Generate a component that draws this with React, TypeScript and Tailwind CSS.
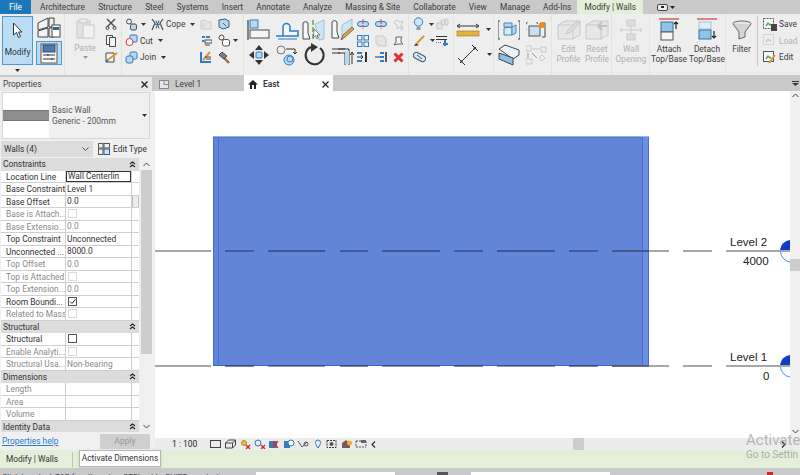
import React from "react";

const S = ({ w = 16, h = 16, children }: { w?: number; h?: number; children: React.ReactNode }) => (
  <svg width={w} height={h} viewBox={`0 0 ${w} ${h}`} fill="none" className="block shrink-0">
    {children}
  </svg>
);
const Caret = ({ c = "#333" }: { c?: string }) => (
  <svg width="5" height="3" viewBox="0 0 5 3" className="block shrink-0"><path d="M0 0h5L2.5 3z" fill={c} /></svg>
);
const D = "#4a4a4a", B = "#2f7cc1", L = "#b9d8ee", G = "#c9c9c9", R = "#e0362c";

const Scissors = () => <S w={12} h={12}><path d="M2 1l8 8M10 1L2 9" stroke={D} strokeWidth="1.4" /><circle cx="2.5" cy="10" r="1.5" stroke={D} /><circle cx="9.5" cy="10" r="1.5" stroke={D} /></S>;
const CopyI = () => <S w={12} h={13}><path d="M1.5 1.5h6v9h-6z" fill="#f6f6f6" stroke={D} /><path d="M4.5 3.5h6v9h-6z" fill="#f6f6f6" stroke={D} /></S>;
const Match = () => <S w={13} h={13}><path d="M1 2h8v9H1z" fill="#f4f4f4" stroke={D} /><path d="M2.5 9L12 2" stroke="#d69a2d" strokeWidth="2" /><path d="M1 11l2-2" stroke={B} strokeWidth="2" /></S>;
const JoinSm = () => <S w={13} h={13}><circle cx="4" cy="3.5" r="2.5" stroke={D} /><rect x="5.5" y="6" width="6" height="6" rx="1.5" fill={L} stroke={D} /></S>;
const CopeI = () => <S w={13} h={13}><path d="M1 1l3 4-3 7M12 1L9 5l3 7" stroke={D} strokeWidth="1.2" /><path d="M5 2.5l3 8M8 2.5l-3 8" stroke={D} /><path d="M3 6.5h7" stroke={B} /></S>;
const CutI = () => <S w={13} h={13}><rect x="5" y="1" width="7" height="7" rx="1" fill={L} stroke={B} /><circle cx="4.5" cy="8" r="3.5" fill="#fff" stroke={R} /></S>;
const JoinI = () => <S w={13} h={13}><rect x="5" y="1" width="7" height="7" rx="1.5" fill={L} stroke={B} /><rect x="1" y="5" width="7" height="7" rx="2" fill={L} stroke={B} /></S>;
const Dis1 = () => <S w={12} h={12}><path d="M1 3l4-1 2 2h4v7H1z" fill="#e7e7e7" stroke={G} /><rect x="2" y="5" width="4" height="4" fill="#ddd" /></S>;
const Cube = () => <S w={12} h={12}><path d="M1 2l6-1 4 2v6l-6 2-4-2z" fill={L} stroke="#2d5f88" /><path d="M5 5l3 3" stroke="#2d5f88" /></S>;
const Paint = () => <S w={12} h={12}><path d="M2 2h3M6 2h4" stroke={B} strokeWidth="2" /><path d="M2 6h2" stroke={B} strokeWidth="2" /><rect x="5" y="5" width="7" height="3" fill="#fff" stroke={D} /><path d="M5 10h5" stroke={D} /></S>;
const Ring = () => <S w={13} h={13}><circle cx="3.5" cy="3.5" r="2.5" stroke={D} /><rect x="4.5" y="5.5" width="7" height="6.5" rx="2" fill="#fff" stroke={D} /></S>;
const Brush = () => <S w={12} h={12}><path d="M1 1v10h10" stroke={B} strokeWidth="2" /><path d="M3 9l7-8" stroke="#d69a2d" strokeWidth="2" /><path d="M5 6h6M6 8h5" stroke={D} /></S>;
const Hammer = () => <S w={13} h={13}><path d="M5 6l6 6" stroke="#a9683a" strokeWidth="2.4" /><path d="M1 4l3-3 5 4-3 3z" fill="#77818a" stroke={D} /></S>;

const AlignBox = () => <S w={24} h={22}><path d="M1 1v20" stroke={D} strokeWidth="1.3" /><rect x="3" y="1" width="8" height="8" fill={L} stroke={B} /><rect x="3" y="11" width="19" height="8" fill="#f5f5f5" stroke={D} /></S>;
const Move = () => <S w={22} h={22}><path d="M11 1l4 5H7zM11 21l4-5H7zM1 11l5-4v8zM21 11l-5-4v8z" fill="#333" /><rect x="8" y="8" width="6" height="6" rx="1" fill={L} stroke={B} /></S>;
const Offset = () => <S w={24} h={20}><path d="M1 16h7V7a3 3 0 0 1 7 0v4h8v5z" fill="#f1f6fa" stroke={B} strokeWidth="1.5" /><path d="M3 19h19" stroke={B} /></S>;
const CopyMove = () => <S w={24} h={22}><circle cx="6" cy="6" r="4" stroke="#777" /><circle cx="14" cy="16" r="5" fill={L} stroke={B} /><circle cx="15" cy="15" r="3" stroke={B} /><path d="M11 5h9v5M18 8l2 2 2-2" stroke="#333" /></S>;
const Split = () => <S w={24} h={22}><path d="M1 20V4a3 3 0 0 1 5 0v10l2 6z" fill="#f5f5f5" stroke={D} /><path d="M11 1v21" stroke="#4ca64c" strokeWidth="1.4" strokeDasharray="5 2" /><path d="M13 5l9-4v19l-5 1z" fill="#cfe3f2" stroke="#9cc3dd" /><path d="M12 10l6 6-3 0 1 3-1.5.5-1-3-2 2z" fill="#fff" stroke="#555" strokeWidth=".7" /></S>;
const EditPen = () => <S w={24} h={24}><path d="M1 20V4a3 3 0 0 1 5 0v10l2 6z" fill="#f5f5f5" stroke={D} /><path d="M11 22V7l10-6v10" fill="#cfe3f2" stroke="#9cc3dd" /><path d="M10 22l2-5 9-8 2 2-9 8z" fill="#e2a63a" stroke="#333" strokeWidth=".6" /></S>;
const Rotate = () => <S w={24} h={24}><path d="M9 4a9 9 0 1 0 9 1" stroke="#333" strokeWidth="2" /><path d="M9 0l7 4-7 5z" fill="#333" /></S>;
const Trim = () => <S w={24} h={22}><path d="M1 5h13M1 9h8" stroke="#333" /><path d="M7 5h11v16M7 9h7v12" stroke="#333" /><path d="M14 7h4v13h-4z" fill={L} /><path d="M21 20V8M19 11l2-3 2 3" stroke="#333" /></S>;
const SmA = () => <S w={12} h={10}><rect x="0.5" y="2.5" width="11" height="5" rx="2.5" fill={L} stroke={B} /><path d="M6 0v10" stroke={R} strokeDasharray="2 1" /></S>;
const Grid4 = () => <S w={12} h={12}><rect x=".5" y=".5" width="4.5" height="4.5" stroke={B} /><rect x="7" y=".5" width="4.5" height="4.5" stroke={B} /><rect x=".5" y="7" width="4.5" height="4.5" stroke={B} /><rect x="7" y="7" width="4.5" height="4.5" stroke={B} /></S>;
const ScaleD = () => <S w={12} h={12}><path d="M1 1h8v2h2v8H3V9H1z" fill="#e4e4e4" stroke={G} /></S>;
const PinD = () => <S w={11} h={11}><path d="M3 1l4 2 3-1-2 4 2 3-3-1-3 2v-4L1 4z" stroke={G} /><path d="M7 8l3 3M10 8l-3 3" stroke={G} /></S>;
const PinK = () => <S w={11} h={10}><path d="M3 1h6L8 3v3l2 2H5L1 9l2-3z" fill="#f4f4f4" stroke="#666" /></S>;
const Ext1 = () => <S w={12} h={12}><path d="M0 6h6M4 4l2 2-2 2" stroke="#333" /><rect x="0" y="1" width="5" height="2" fill={B} /><rect x="0" y="9" width="5" height="2" fill={B} /><path d="M9 1v10" stroke="#333" strokeWidth="2" /></S>;
const Ext2 = () => <S w={12} h={12}><path d="M0 6h5" stroke="#333" /><rect x="5" y="1" width="4" height="2" fill={B} /><rect x="5" y="5" width="4" height="2" fill={B} /><rect x="5" y="9" width="4" height="2" fill={B} /><path d="M11 1v10" stroke="#333" strokeWidth="1.6" /></S>;
const Del = () => <S w={11} h={11}><path d="M1.5 1.5l8 8M9.5 1.5l-8 8" stroke="#e03131" strokeWidth="3" /></S>;

const Bulb = () => <S w={11} h={14}><circle cx="5.5" cy="5" r="4.2" fill="#cfe6f7" stroke={B} /><path d="M3.5 10h4v3h-4z" fill="#999" /></S>;
const Cubes = () => <S w={13} h={12}><path d="M1 5h5v6H1zM5 2h4v5H5zM9 1h3v6H9z" fill="#e4e4e4" stroke={G} /></S>;
const BrushV = () => <S w={12} h={12}><path d="M1 11l2-3 3 2-3 1z" fill="#7b3c1d" /><path d="M4 8l7-7" stroke="#d69a2d" strokeWidth="2" /></S>;
const Lines = () => <S w={12} h={12}><path d="M0 1.5h11M0 4.5h11" stroke="#333" /><path d="M0 7.5h5" stroke="#777" strokeDasharray="1 1" /><path d="M9 5v6M7 9h5" stroke={B} strokeWidth="2" /></S>;
const Link = () => <S w={13} h={12}><rect x="0" y="3" width="13" height="6" rx="3" transform="rotate(28 6.5 6)" fill="#d8e8f5" stroke="#405a70" /><path d="M4 4l5 4" stroke="#405a70" /></S>;
const Ruler = () => <S w={24} h={14}><path d="M1 3h22M1 3l3-2M1 3l3 2M23 3l-3-2M23 3l-3 2" stroke="#333" /><rect x="1" y="8" width="22" height="5" fill="#e3b23c" stroke="#9a7a1e" strokeWidth=".6" /></S>;
const Diag = () => <S w={22} h={22}><path d="M3 19L19 3M1 14l7 7M15 1l6 6" stroke="#333" /><path d="M3 19l3-1-2-2zM19 3l-3 1 2 2z" fill="#333" /></S>;
const Box3 = () => <S w={22} h={20}><path d="M2 1H0v18h2M20 1h2v18h-2" stroke="#444" /><path d="M6 8l8-1v8H6z" fill="#d8ecf8" stroke="#4b88b5" /><path d="M6 3h8v4H6zM14 7l4-2v8l-4 2z" fill={L} stroke="#4b88b5" /></S>;
const Sheets = () => <S w={22} h={22}><path d="M1 5l6-4 14 5v5l-6 4z" fill="#e9f2f8" stroke="#444" /><path d="M1 9l14 5v7L1 15z" fill="#8fbfe3" stroke="#444" /></S>;
const BoxS = () => <S w={20} h={16}><path d="M0 8a6 6 0 0 1 12-6" stroke="#555" /><rect x="3" y="4" width="11" height="10" fill="#cbdff0" stroke="#555" /><path d="M16 1h3v14h-3" stroke="#444" /><circle cx="16" cy="3" r="3" fill="#ef8b1c" /></S>;
const CtrlD = () => <S w={22} h={20}><rect x="0" y="1" width="5" height="5" stroke={G} /><rect x="15" y="2" width="5" height="5" stroke={G} /><path d="M6 4h8" stroke={G} /><path d="M2 8v5M6 8l5 5" stroke="#999" /><rect x="0" y="14" width="6" height="5" stroke={G} /><path d="M16 10l3 3-3 3-3-3z" stroke={G} /></S>;

const SelBig = () => <S w={12} h={17}><path d="M1.5 1v12l3-2.5 2 5 2-1-2-4.5H10z" fill="#fff" stroke="#333" /></S>;
const Sel2 = () => <S w={24} h={22}><path d="M1 6l10-5v9l-10 3zM1 14l10-3v9H1z" fill="#f4f4f4" stroke="#444" /><path d="M12 1h5v9h-5z" fill="#eee" stroke="#444" /><path d="M12 11h5v9h-5z" fill="#eee" stroke="#444" /><rect x="15" y="8" width="8" height="12" fill="#fff" stroke="#444" /><rect x="16" y="10" width="6" height="3" fill="#375f9b" /></S>;
const PropI = () => <S w={20} h={21}><rect x="2" y="1" width="16" height="19" fill="#f8f8f8" stroke="#555" /><rect x="4" y="2" width="12" height="7" fill="#4d78b0" stroke="#2b4d7e" /><path d="M4 12h12M4 16h12" stroke="#333" /><path d="M9 11v2M13 15v2" stroke="#333" /></S>;
const Paste = () => <S w={19} h={21}><path d="M1 3h13v17H1z" fill="#e2e2e2" stroke={G} /><rect x="4" y="1" width="7" height="4" fill="#ececec" stroke={G} /><path d="M7 7h11v13H7z" fill="#f2f2f2" stroke={G} /></S>;
const Prof = ({ sym }: { sym: "p" | "r" }) => <S w={24} h={22}><path d="M1 6l7-4h15v14l-7 4H1z" fill="#e7e7e7" stroke={G} /><path d="M1 6h15v14" stroke={G} />{sym === "p" ? <path d="M9 15l2-4 9-9 3 2-9 9z" fill="#dadada" stroke={G} /> : <path d="M22 7h-8M17 3l-4 4 4 4" stroke="#c2c2c2" strokeWidth="2" />}</S>;
const WallOp = () => <S w={24} h={22}><rect x="8" y="1" width="8" height="6" fill="#ddd" stroke={G} /><rect x="8" y="15" width="8" height="6" fill="#ddd" stroke={G} /><path d="M12 7v8M1 11h22M1 11l2-2M1 11l2 2M23 11l-2-2M23 11l-2 2" stroke={G} /></S>;
const Attach = () => <S w={21} h={23}><path d="M0 1h20" stroke="#d4605a" strokeWidth="1.5" /><rect x="2" y="4" width="12" height="10" fill="#8ec4e8" stroke="#3a6f9c" /><rect x="2" y="14" width="12" height="8" fill="#f6f6f6" stroke="#555" /><path d="M17 11V4M15 6l2-2 2 2" stroke="#222" strokeWidth="1.2" /></S>;
const Detach = () => <S w={21} h={23}><path d="M0 1h20" stroke="#d4605a" strokeWidth="1.5" /><rect x="2" y="4" width="12" height="7" fill="#e2eef7" stroke="#9fc3dc" /><rect x="2" y="12" width="12" height="9" fill="#8ec4e8" stroke="#3a6f9c" /><path d="M17 13v7M15 18l2 2 2-2" stroke="#222" strokeWidth="1.2" /></S>;
const Funnel = () => <S w={20} h={20}><ellipse cx="10" cy="3.5" rx="9" ry="2.5" fill="#e4e4e4" stroke="#666" /><path d="M1 4l6 8v7l6-2v-5l6-8" fill="#d4d4d4" stroke="#666" /></S>;
const SaveI = ({ dis, pen }: { dis?: boolean; pen?: boolean }) => <S w={14} h={13}><rect x=".5" y=".5" width="10" height="10" fill={dis ? "#eee" : "#fafafa"} stroke={dis ? G : "#555"} strokeDasharray={pen ? undefined : "2 1"} /><path d="M3 8l2-3 2 2 1-1" stroke={dis ? G : "#4ca64c"} strokeWidth="1.4" />{!dis && !pen && <rect x="8" y="6" width="6" height="7" fill="#444" />}{pen && <path d="M6 12l6-8" stroke="#d69a2d" strokeWidth="2" />}</S>;

const Txt = ({ c = "#3d3d3d", children }: { c?: string; children: React.ReactNode }) => (
  <span className="text-[8.4px] leading-[10px] whitespace-nowrap text-center" style={{ color: c }}>{children}</span>
);

const tabs = ["Architecture", "Structure", "Steel", "Systems", "Insert", "Annotate", "Analyze", "Massing & Site", "Collaborate", "View", "Manage", "Add-Ins"];

const Panel = ({ w, children }: { w: number; children: React.ReactNode }) => (
  <div className="flex h-full shrink-0 border-r border-[#e0e6d8]" style={{ width: w }}>{children}</div>
);
const Col = ({ w, children }: { w: number; children: React.ReactNode }) => (
  <div className="flex h-full flex-col pt-[2px] shrink-0" style={{ width: w }}>{children}</div>
);
const Sm = ({ children }: { children?: React.ReactNode }) => (
  <div className="flex h-[16.5px] items-center gap-[2px]">{children}</div>
);
const Big2 = ({ w, a, b }: { w: number; a: React.ReactNode; b: React.ReactNode }) => (
  <div className="flex h-full flex-col items-center pt-[3px] shrink-0" style={{ width: w }}>
    <div className="flex h-[25px] items-center">{a}</div>
    <div className="flex h-[25px] items-center">{b}</div>
  </div>
);
const Big = ({ w, icon, l1, l2, c }: { w: number; icon: React.ReactNode; l1: string; l2?: string; c?: string }) => (
  <div className="flex h-full flex-col items-center pt-[3px] shrink-0" style={{ width: w }}>
    <div className="flex h-[25px] items-center">{icon}</div>
    <div className="mt-[2px] flex flex-col items-center">
      <Txt c={c}>{l1}</Txt>
      {l2 && <Txt c={c}>{l2}</Txt>}
    </div>
  </div>
);

const Ribbon = () => (
  <div className="flex h-[61px] shrink-0 bg-[#eeeeee]">
    <Panel w={65}>
      <div className="flex w-full">
        <div className="ml-[2px] mt-[2px] flex w-[31px] flex-col items-center">
          <div className="flex h-[49px] w-[31px] flex-col items-center border border-[#4b9ad8] bg-[#bcdcf4] pt-[5px]">
            <SelBig />
            <span className="mt-[8px] text-[8.4px] leading-[10px] text-[#333]">Modify</span>
          </div>
          <div className="mt-[4px]"><Caret /></div>
        </div>
        <div className="ml-[3px] flex flex-col items-center pt-[3px]">
          <div className="h-[22px]"><Sel2 /></div>
          <div className="mt-[2px] flex h-[24px] w-[26px] items-center justify-center border border-[#4b9ad8] bg-[#bcdcf4]"><PropI /></div>
        </div>
      </div>
    </Panel>
    <Panel w={57}>
      <div className="flex w-[40px] flex-col items-center pt-[4px]">
        <Paste />
        <span className="mt-[4px] text-[8.4px] leading-[10px] text-[#b0b0b0]">Paste</span>
        <div className="mt-[3px]"><Caret c="#999" /></div>
      </div>
      <Col w={14}>
        <Sm><Scissors /></Sm>
        <Sm><CopyI /></Sm>
        <Sm><Match /></Sm>
      </Col>
    </Panel>
    <Panel w={122}>
      <Col w={78}>
        <Sm><div className="ml-[1px]" /><JoinSm /><div className="ml-[1px]"><Caret /></div><div className="ml-[1px]" /><CopeI /><Txt>Cope</Txt><div className="ml-[3px]"><Caret /></div></Sm>
        <Sm><div className="ml-[1px]" /><CutI /><Txt>Cut</Txt><div className="ml-[3px]"><Caret /></div></Sm>
        <Sm><div className="ml-[1px]" /><JoinI /><Txt>Join</Txt><div className="ml-[3px]"><Caret /></div></Sm>
      </Col>
      <Col w={18}>
        <Sm><Dis1 /></Sm><Sm><Paint /></Sm><Sm><Brush /></Sm>
      </Col>
      <Col w={24}>
        <Sm><Cube /></Sm><Sm><Ring /><Caret /></Sm><Sm><Hammer /></Sm>
      </Col>
    </Panel>
    <Panel w={165}>
      <Big2 w={30} a={<AlignBox />} b={<Move />} />
      <Big2 w={26} a={<Offset />} b={<CopyMove />} />
      <Big2 w={28} a={<Split />} b={<Rotate />} />
      <Big2 w={29} a={<EditPen />} b={<Trim />} />
      <Col w={18}><Sm><SmA /></Sm><Sm><Grid4 /></Sm><Sm><Ext1 /></Sm></Col>
      <Col w={18}><Sm><SmA /></Sm><Sm><ScaleD /></Sm><Sm><Ext2 /></Sm></Col>
      <Col w={16}><Sm><PinD /></Sm><Sm><PinK /></Sm><Sm><Del /></Sm></Col>
    </Panel>
    <Panel w={45}>
      <Col w={27}>
        <Sm><div className="ml-[2px]" /><Bulb /><div className="ml-[3px]"><Caret /></div></Sm>
        <Sm><div className="ml-[2px]" /><BrushV /><div className="ml-[3px]"><Caret /></div></Sm>
        <Sm><div className="ml-[2px]" /><Link /></Sm>
      </Col>
      <Col w={15}><Sm><Cubes /></Sm><Sm><Lines /></Sm></Col>
    </Panel>
    <Panel w={40}>
      <div className="flex h-full w-full flex-col pt-[3px] pl-[2px]">
        <div className="flex h-[25px] items-center gap-[6px]"><Ruler /><Caret /></div>
        <div className="flex h-[25px] items-center gap-[8px]"><div className="ml-[1px]"><Diag /></div><Caret /></div>
      </div>
    </Panel>
    <Panel w={58}>
      <div className="flex w-[30px] flex-col items-center pt-[3px]">
        <div className="flex h-[25px] items-center"><Box3 /></div>
        <div className="flex h-[25px] items-center"><Sheets /></div>
      </div>
      <div className="flex flex-col pt-[3px] pl-[2px]">
        <div className="flex h-[25px] items-center"><BoxS /></div>
        <div className="flex h-[25px] items-center"><CtrlD /></div>
      </div>
    </Panel>
    <div className="w-[2px] shrink-0" />
    <Panel w={58}>
      <Big w={29} icon={<Prof sym="p" />} l1="Edit" l2="Profile" c="#b0b0b0" />
      <Big w={28} icon={<Prof sym="r" />} l1="Reset" l2="Profile" c="#b0b0b0" />
    </Panel>
    <Panel w={38}><Big w={38} icon={<WallOp />} l1="Wall" l2="Opening" c="#b0b0b0" /></Panel>
    <Big w={38} icon={<Attach />} l1="Attach" l2="Top/Base" />
    <Panel w={38}><Big w={38} icon={<Detach />} l1="Detach" l2="Top/Base" /></Panel>
    <div className="flex h-full w-[31px] shrink-0 justify-center"><Big w={31} icon={<Funnel />} l1="Filter" /></div>
    <div className="mt-[2px] h-[50px] w-px shrink-0 bg-[#c5c5c5]" />
    <div className="flex flex-col pt-[2px] pl-[5px]">
      <Sm><SaveI /><Txt>Save</Txt></Sm>
      <Sm><SaveI dis /><Txt c="#b0b0b0">Load</Txt></Sm>
      <Sm><SaveI pen /><Txt>Edit</Txt></Sm>
    </div>
  </div>
);

const Cheva = () => (
  <svg width="7" height="7" viewBox="0 0 7 7" fill="none" className="block"><path d="M1 3l2.5-2L6 3M1 6l2.5-2L6 6" stroke="#222" strokeWidth="1.1" /></svg>
);
const Head = ({ t }: { t: string }) => (
  <div className="flex h-[12.5px] items-center justify-between bg-[#dcdcdc] pl-[2px] pr-[3px] text-[8.4px] leading-[12px] text-[#333]">
    <span>{t}</span><Cheva />
  </div>
);
type RowT = { l: string; v?: string; dim?: boolean; box?: "on" | "off" | "dis"; act?: boolean; thumb?: boolean };
const Row = ({ l, v, dim, box, act, thumb }: RowT) => (
  <div className="flex h-[12.5px] border-b border-[#cfcfcf] bg-white text-[8.4px] leading-[12px]">
    <div className={`w-[65px] shrink-0 overflow-hidden whitespace-nowrap border-r border-[#cfcfcf] pl-[5px] ${dim ? "text-[#8a8a8a]" : "text-[#333]"}`}>{l}</div>
    <div className={`flex w-[65px] shrink-0 items-center overflow-hidden whitespace-nowrap pl-[1px] ${dim ? "text-[#8a8a8a]" : "text-[#333]"} ${act ? "border border-[#333] pl-0" : ""}`}>
      {box === "on" && <svg width="9" height="9" viewBox="0 0 9 9" className="ml-[1px]" fill="none"><rect x=".5" y=".5" width="8" height="8" stroke="#555" /><path d="M2 4.5l2 2 3.5-4.5" stroke="#333" /></svg>}
      {box === "off" && <div className="ml-[1px] h-[9px] w-[9px] border border-[#555]" />}
      {box === "dis" && <div className="ml-[1px] h-[9px] w-[9px] border border-[#dadada]" />}
      {v}
    </div>
    <div className="flex w-[8px] shrink-0 justify-end border-l border-[#cfcfcf]">
      {thumb && <div className="h-full w-[7px] border-x border-[#bdbdbd] bg-[#ececec]" />}
    </div>
  </div>
);

const PropsPanel = () => (
  <div className="flex h-full w-[152px] shrink-0 flex-col bg-[#f0f0f0]">
    <div className="flex h-[16px] shrink-0 items-center justify-between border-t-2 border-[#c9c9c9] bg-[#e9e9e9] pl-[3px] pr-[4px] text-[8.4px] text-[#444]">
      <span>Properties</span>
      <svg width="7" height="7" viewBox="0 0 7 7" fill="none"><path d="M.5.5l6 6M6.5.5l-6 6" stroke="#222" strokeWidth="1.3" /></svg>
    </div>
    <div className="mx-[2px] mt-[1px] flex h-[47px] shrink-0 items-center border border-[#d6d6d6]">
      <div className="flex h-[45px] w-[46px] shrink-0 items-center bg-white">
        <div className="h-[11px] w-full border-y border-[#777] bg-[#8e8e8e]" />
      </div>
      <div className="ml-[3px] flex-1 text-[8.4px] leading-[11px] text-[#555]">
        <div>Basic Wall</div>
        <div className="whitespace-nowrap">Generic - 200mm</div>
      </div>
      <div className="mr-[2px]"><Caret /></div>
    </div>
    <div className="mt-[1px] flex h-[18px] shrink-0 items-center">
      <div className="ml-[1px] flex h-[16px] w-[92px] items-center justify-between bg-[#dcdcdc] pl-[3px] pr-[4px] text-[8.4px] text-[#333]">
        <span>Walls (4)</span>
        <svg width="7" height="4" viewBox="0 0 7 4" fill="none"><path d="M.5.5l3 3 3-3" stroke="#555" /></svg>
      </div>
      <div className="ml-[5px]"><S w={12} h={12}><rect x=".5" y=".5" width="4.5" height="4.5" stroke="#555" /><rect x="6" y=".5" width="5.5" height="4.5" stroke="#555" /><rect x=".5" y="6" width="4.5" height="5.5" stroke="#555" /><rect x="6" y="6" width="5.5" height="5.5" stroke="#2f5f9a" fill="#cfe0f0" /></S></div>
      <span className="ml-[3px] whitespace-nowrap text-[8.4px] text-[#333]">Edit Type</span>
    </div>
    <div className="flex min-h-0 flex-1">
      <div className="ml-[1px] h-[274px] w-[138px] shrink-0 overflow-hidden">
        <Head t="Constraints" />
        <Row l="Location Line" v="Wall Centerlin" act />
        <Row l="Base Constraint" v="Level 1" />
        <Row l="Base Offset" v="0.0" thumb />
        <Row l="Base is Attach..." box="dis" dim />
        <Row l="Base Extensio..." v="0.0" dim />
        <Row l="Top Constraint" v="Unconnected" />
        <Row l="Unconnected ..." v="8000.0" />
        <Row l="Top Offset" v="0.0" dim />
        <Row l="Top is Attached" box="dis" dim />
        <Row l="Top Extension..." v="0.0" dim />
        <Row l="Room Boundi..." box="on" />
        <Row l="Related to Mass" box="dis" dim />
        <Head t="Structural" />
        <Row l="Structural" box="off" />
        <Row l="Enable Analyti..." box="dis" dim />
        <Row l="Structural Usa..." v="Non-bearing" dim />
        <Head t="Dimensions" />
        <Row l="Length" dim />
        <Row l="Area" dim />
        <Row l="Volume" dim />
        <Head t="Identity Data" />
      </div>
      <div className="ml-[1px] flex h-[274px] w-[12px] shrink-0 flex-col items-center">
        <div className="flex h-[12px] items-center"><svg width="7" height="5" viewBox="0 0 7 5" fill="none"><path d="M.5 4l3-3 3 3" stroke="#444" /></svg></div>
        <div className="h-[184px] w-[11px] bg-[#cdcdcd]" />
        <div className="flex-1" />
        <div className="flex h-[12px] items-center"><svg width="7" height="5" viewBox="0 0 7 5" fill="none"><path d="M.5 1l3 3 3-3" stroke="#444" /></svg></div>
      </div>
    </div>
    <div className="flex h-[17px] shrink-0 items-center justify-between pl-[2px] pr-[2px] text-[8.4px]">
      <span className="text-[#2a7cc7] underline">Properties help</span>
      <div className="flex h-[15px] w-[50px] items-center justify-center border border-[#d0d0d0] bg-[#cfcfcf] text-[#999]">Apply</div>
    </div>
  </div>
);

const dashes: [number, number][] = [[155, 211], [225, 254], [268, 325], [340, 368], [382, 440], [454, 483], [497, 555], [569, 598], [612, 669], [683, 712], [726, 790]];

const Canvas = () => (
  <div className="relative min-h-0 flex-1 overflow-hidden bg-white">
    <svg className="absolute inset-0 block" width="645" height="347" viewBox="155 91 645 347" fill="none">
      <rect x="213.5" y="137" width="435" height="229" fill="#6285d8" />
      <path d="M213 137h436" stroke="#3f62c4" strokeWidth="1" />
      <path d="M213.5 137v229M218.5 137v229M642.5 137v229M648.5 137v229" stroke="#4a6fd0" strokeWidth="1" />
      <rect x="643" y="137" width="5" height="229" fill="#6a90e4" />
      <path d="M213 365.5h436" stroke="#2f66d6" strokeWidth="1" />
      {dashes.map(([a, b]) => {
        const inA = Math.max(a, 213), inB = Math.min(b, 649);
        return (
          <g key={a}>
            {a < 213 || b > 649 ? <path d={`M${a} 251h${b - a}M${a} 366h${b - a}`} stroke="#8a8a8a" strokeWidth="1.4" /> : null}
            {inB > inA && <path d={`M${inA} 251h${inB - inA}`} stroke="#2f4a86" strokeWidth="1.4" />}
            {inB > inA && <path d={`M${inA} 366h${inB - inA}`} stroke="#253a66" strokeWidth="1.2" />}
          </g>
        );
      })}
      <path d="M790 240a11 11 0 0 0-10 10h10z" fill="#0b3fc4" />
      <path d="M780.5 252a11 11 0 0 0 9.5 10" stroke="#4f8be8" />
      <path d="M790 355a11 11 0 0 0-10 10h10z" fill="#0b3fc4" />
      <path d="M780.5 367a11 11 0 0 0 9.5 10" stroke="#4f8be8" />
    </svg>
    <span className="absolute left-[575px] top-[144px] text-[11.5px] leading-[14px] text-[#222] [font-family:'Liberation_Sans',sans-serif]">Level 2</span>
    <span className="absolute left-[588px] top-[163px] text-[11.5px] leading-[14px] text-[#222] [font-family:'Liberation_Sans',sans-serif]">4000</span>
    <span className="absolute left-[575px] top-[259px] text-[11.5px] leading-[14px] text-[#222] [font-family:'Liberation_Sans',sans-serif]">Level 1</span>
    <span className="absolute left-[608px] top-[278px] text-[11.5px] leading-[14px] text-[#222] [font-family:'Liberation_Sans',sans-serif]">0</span>
    <div className="absolute bottom-0 right-0 top-0 flex w-[10px] flex-col items-center bg-[#f0f0f0]">
      <svg className="mt-[2px]" width="7" height="5" viewBox="0 0 7 5" fill="none"><path d="M.5 4l3-3 3 3" stroke="#444" /></svg>
      <div className="mt-[161px] h-[12px] w-full bg-[#cdcdcd]" />
      <div className="flex-1" />
      <svg className="mb-[4px]" width="7" height="5" viewBox="0 0 7 5" fill="none"><path d="M.5 1l3 3 3-3" stroke="#444" /></svg>
    </div>
  </div>
);

const ViewBar = () => (
  <div className="relative flex h-[12px] shrink-0 items-center bg-[#ececec] pl-[17px] text-[8.5px] text-[#222]">
    <span className="w-[38px] whitespace-nowrap">1 : 100</span>
    <div className="flex items-center gap-[2.5px]">
      <S w={12} h={10}><rect x=".5" y="1.5" width="10" height="7" stroke="#444" /></S>
      <S w={12} h={10}><path d="M.5 4h7v5h-7zM.5 4l3-3h7v5l-3 3M7.5 4l3-3" stroke="#444" /></S>
      <S w={12} h={10}><circle cx="5" cy="4" r="2.5" fill="#f0c040" stroke="#b58a20" /><path d="M7 6l4 4M11 6l-4 4" stroke="#d22" strokeWidth="1.3" /></S>
      <S w={12} h={10}><circle cx="4" cy="4" r="3" stroke="#2f7cc1" /><path d="M7 6l4 4M11 6l-4 4" stroke="#d22" strokeWidth="1.3" /></S>
      <S w={12} h={10}><rect x="1" y="2" width="8" height="7" fill="#3f78b8" /><path d="M5 2l5 7M10 2L5 9" stroke="#d22" strokeWidth="1.2" /></S>
      <S w={12} h={10}><rect x="1" y="2" width="6" height="7" fill="#3f78b8" /><circle cx="8" cy="4" r="3" fill="#fff" stroke="#2f7cc1" /></S>
      <S w={12} h={10}><path d="M1 2l4 6 5-5" stroke="#555" /><circle cx="9" cy="5" r="2" stroke="#555" /></S>
      <S w={12} h={10}><path d="M6 9C4 6 3.500 5 3.500 3.500a2.500 2.500 0 0 1 5 0C8.500 5 8 6 6 9z" stroke="#2f7cc1" /></S>
      <S w={12} h={10}><rect x="1" y="1.500" width="9" height="7" stroke="#333" strokeDasharray="2 1" /><circle cx="5.500" cy="5" r="2" fill="#555" /></S>
      <S w={12} h={10}><path d="M1 9V4l4-3 4 3v5z" fill="#7a5a5a" /><circle cx="8.500" cy="4" r="2.500" fill="#f0b030" /></S>
      <S w={12} h={10}><path d="M1 2h10M1 8h10M1 2v6M11 2v6" stroke="#555" strokeDasharray="2 1" /><rect x="6" y="1" width="5" height="3" fill="#666" /></S>
      <svg width="5" height="7" viewBox="0 0 5 7" fill="none" className="ml-[1px]"><path d="M4 .5l-3 3 3 3" stroke="#222" strokeWidth="1.1" /></svg>
    </div>
    <div className="absolute left-[418px] top-0 h-full w-[11px] bg-[#cdcdcd]" />
    <svg className="absolute right-[14px] top-[3px]" width="5" height="7" viewBox="0 0 5 7" fill="none"><path d="M1 .5l3 3-3 3" stroke="#222" strokeWidth="1.1" /></svg>
  </div>
);

export default function App() {
  return (
    <div className="relative flex h-[475px] w-[800px] flex-col overflow-hidden bg-[#c9c9c9] [font-family:'Roboto','Noto_Sans',sans-serif]">
      <div className="relative flex h-[14px] shrink-0 items-center bg-[#c9c9c9] text-[8.3px] text-[#3a3a3a]">
        <div className="flex h-full w-[31px] items-center justify-center bg-[#1b78b8] text-white">File</div>
        <div className="ml-[9px] flex items-center gap-[13.2px]">
          {tabs.map((t) => <span key={t} className="whitespace-nowrap">{t}</span>)}
          <span className="-ml-[7px] flex h-[14px] items-center whitespace-nowrap bg-[#e3efd8] px-[7px]">Modify | Walls</span>
          <div className="ml-[1px] flex items-center gap-[2px]">
            <div className="flex h-[7px] w-[11px] items-center justify-center rounded-[2px] border border-[#444] bg-[#eee]"><div className="h-[2px] w-[3px] bg-[#222]" /></div>
            <Caret c="#222" />
          </div>
        </div>
      </div>
      <Ribbon />
      <div className="flex h-[375px] shrink-0">
        <PropsPanel />
        <div className="flex min-w-0 flex-1 flex-col">
          <div className="relative flex h-[16px] shrink-0 items-center bg-[#c9c9c9] text-[8.4px] text-[#444]">
            <div className="ml-[5px] flex h-full w-[86px] items-center gap-[5px] pl-[2px] pt-[2px]">
              <S w={11} h={11}><rect x=".5" y="1.500" width="9" height="8" fill="#e6e6e6" stroke="#888" /><path d="M5 1.500v4h4.500" stroke="#888" /></S>
              <span>Level 1</span>
            </div>
            <div className="ml-[1px] flex h-full w-[89px] items-center bg-white pl-[4px] pr-[4px] pt-[2px] font-semibold text-[#333]">
              <svg width="10" height="9" viewBox="0 0 10 9" className="block"><path d="M5 0L0 4.500h2V9h6V4.500h2z" fill="#222" /><path d="M4 5h2v4H4z" fill="#fff" /></svg>
              <span className="ml-[5px]">East</span>
              <div className="flex-1" />
              <svg width="7" height="7" viewBox="0 0 7 7" fill="none"><path d="M.5.5l6 6M6.5.5l-6 6" stroke="#222" strokeWidth="1.2" /></svg>
            </div>
            <svg className="absolute right-[1px] top-[6px]" width="7" height="5" viewBox="0 0 7 5"><path d="M0 0h7v1H0zM0 2h7L3.500 5z" fill="#333" /></svg>
          </div>
          <div className="flex min-h-0 flex-1">
            <div className="w-[3px] shrink-0 bg-[#f0f0f0]" />
            <div className="flex min-w-0 flex-1 flex-col">
              <Canvas />
              <ViewBar />
            </div>
          </div>
        </div>
      </div>
      <div className="relative flex h-[18px] shrink-0 items-center bg-[#e3efd8] text-[8.4px] text-[#333]">
        <span className="ml-[6px] w-[52px] whitespace-nowrap">Modify | Walls</span>
        <div className="ml-[14px] h-[15px] w-px bg-[#bcc5b3]" />
        <div className="ml-[6px] flex h-[17px] w-[82px] -translate-y-[1px] items-center justify-center whitespace-nowrap border border-[#b5b5b5] bg-white shadow-sm">Activate Dimensions</div>
      </div>
      <div className="relative h-[7px] shrink-0 overflow-hidden bg-[#c9c9c9] text-[8px] text-[#333]">
        <span className="absolute left-[2px] top-[3px] whitespace-nowrap">Click to select, TAB for alternates, CTRL adds, SHIFT unselects.</span>
        <div className="absolute left-[256px] top-[4px] h-[3px] w-[139px] bg-white" />
        <div className="absolute left-[471px] top-[4px] h-[3px] w-[139px] bg-white" />
        <div className="absolute left-[437px] top-[4px] h-[3px] w-[11px] bg-[#555]" />
        <div className="absolute left-[767px] top-[4px] h-[3px] w-[6px] bg-[#d22]" />
      </div>
      <div className="pointer-events-none absolute left-[746px] top-[431px] whitespace-nowrap text-[15px] leading-[18px] text-[#9a9a9a]/70">Activate</div>
      <div className="pointer-events-none absolute left-[746px] top-[449px] whitespace-nowrap text-[10px] leading-[12px] text-[#9a9a9a]/80">Go to Settin</div>
    </div>
  );
}
